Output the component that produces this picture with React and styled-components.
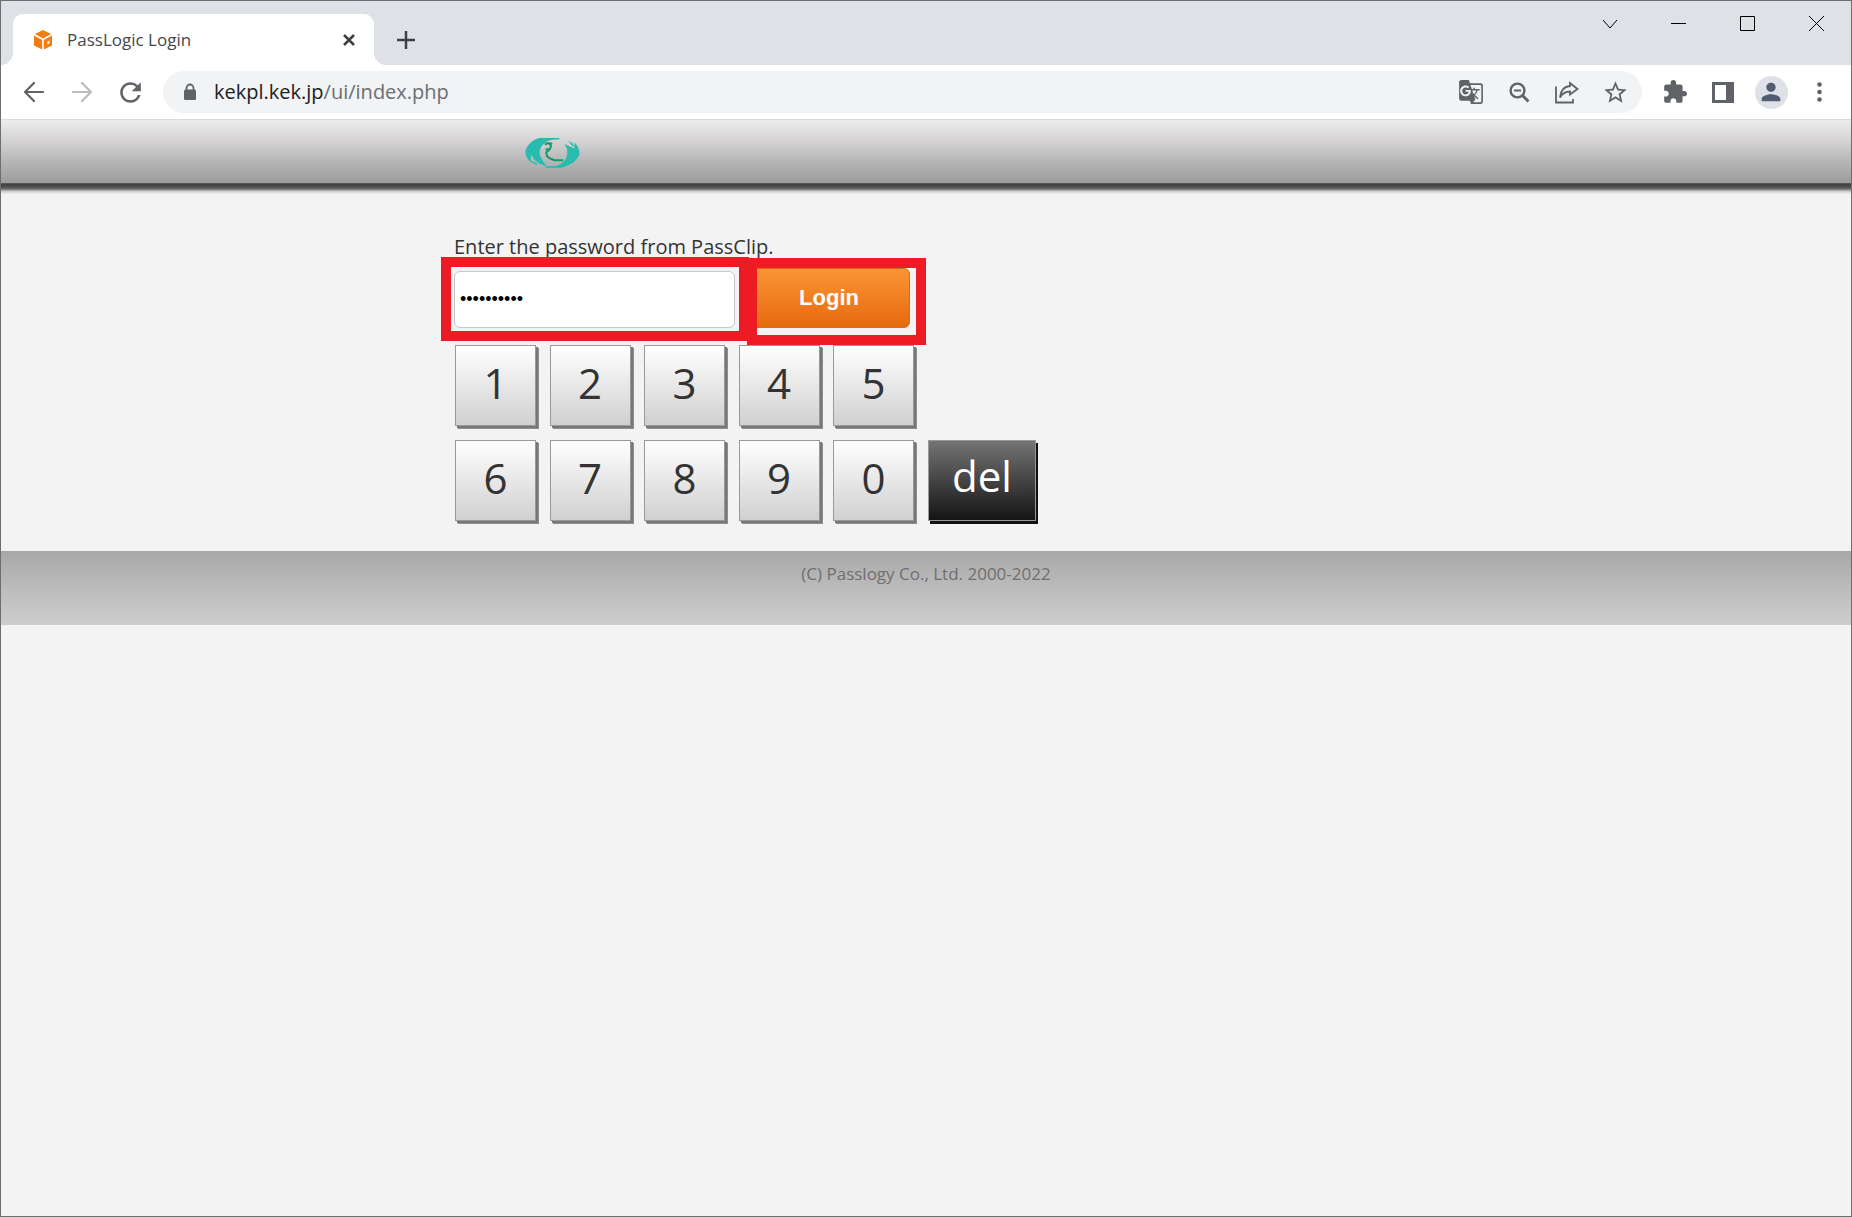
import React, { useState } from 'react'
import styled, { createGlobalStyle, css } from 'styled-components'
import {
  MdExtension,
  MdGTranslate,
  MdPerson,
  MdRefresh,
  MdStarBorder
} from 'react-icons/md'

const keyRows = [
  ['1', '2', '3', '4', '5'],
  ['6', '7', '8', '9', '0']
]

const App = () => {
  const [password, setPassword] = useState('1234567890')

  return (
    <Window>
      <GlobalStyle />
      <TabStrip>
        <Tab>
          <CubeIcon />
          <TabTitle>PassLogic Login</TabTitle>
          <TabButton aria-label="Close tab">
            <svg width="12" height="12" viewBox="0 0 12 12">
              <path d="M1 1l10 10M11 1L1 11" />
            </svg>
          </TabButton>
        </Tab>
        <NewTab aria-label="New tab">
          <svg width="18" height="18" viewBox="0 0 18 18">
            <path d="M9 0v18M0 9h18" />
          </svg>
        </NewTab>
        <WindowControls />
      </TabStrip>

      <Toolbar>
        <IconButton aria-label="Back">
          <ArrowIcon d="M19 10H1M10 1L1 10l9 9" />
        </IconButton>
        <IconButton aria-label="Forward" $faded>
          <ArrowIcon d="M1 10h18M10 1l9 9-9 9" />
        </IconButton>
        <IconButton aria-label="Reload">
          <MdRefresh size={31} />
        </IconButton>
        <AddressBar>
          <LockIcon />
          <Address>
            <Host>kekpl.kek.jp</Host>/ui/index.php
          </Address>
          <IconButton aria-label="Translate">
            <MdGTranslate size={26} />
          </IconButton>
          <IconButton aria-label="Zoom">
            <ZoomOutIcon />
          </IconButton>
          <IconButton aria-label="Share">
            <ShareIcon />
          </IconButton>
          <IconButton aria-label="Bookmark">
            <MdStarBorder size={27} />
          </IconButton>
        </AddressBar>
        <IconButton aria-label="Extensions">
          <MdExtension size={26} />
        </IconButton>
        <IconButton aria-label="Side panel">
          <svg width="22" height="21" viewBox="0 0 22 21">
            <path
              fill="currentColor"
              fillRule="evenodd"
              d="M0 0h22v21H0zM3 3v15h11V3z"
            />
          </svg>
        </IconButton>
        <IconButton aria-label="Profile">
          <Avatar>
            <MdPerson size={28} />
          </Avatar>
        </IconButton>
        <IconButton aria-label="Menu">
          <svg width="5" height="20" viewBox="0 0 5 20" fill="currentColor">
            <circle cx="2.5" cy="2.5" r="2.3" />
            <circle cx="2.5" cy="10" r="2.3" />
            <circle cx="2.5" cy="17.5" r="2.3" />
          </svg>
        </IconButton>
      </Toolbar>

      <Header>
        <Column>
          <Logo />
        </Column>
      </Header>

      <Main>
        <Column>
          <Label htmlFor="password">Enter the password from PassClip.</Label>
          <LoginRow onSubmit={e => e.preventDefault()}>
            <Field>
              <PasswordInput
                id="password"
                type="password"
                value={password}
                onChange={e => setPassword(e.target.value)}
              />
              <FieldFrame />
            </Field>
            <Field>
              <LoginButton type="submit">Login</LoginButton>
              <ButtonFrame />
            </Field>
          </LoginRow>
          <Keypad>
            {keyRows.map((row, index) => (
              <KeyRow key={index}>
                <Digits>
                  {row.map(digit => (
                    <Key
                      key={digit}
                      type="button"
                      onClick={() => setPassword(password + digit)}
                    >
                      {digit}
                    </Key>
                  ))}
                </Digits>
                {index === 1 && (
                  <DeleteKey
                    type="button"
                    onClick={() => setPassword(password.slice(0, -1))}
                  >
                    del
                  </DeleteKey>
                )}
              </KeyRow>
            ))}
          </Keypad>
        </Column>
      </Main>

      <Footer>(C) Passlogy Co., Ltd. 2000-2022</Footer>
    </Window>
  )
}

const WindowControls = () => (
  <Controls>
    <ControlButton aria-label="Search tabs">
      <svg width="16" height="16" viewBox="0 0 16 16">
        <path d="M1 4l7 8 7-8" />
      </svg>
    </ControlButton>
    <ControlButton aria-label="Minimize">
      <svg width="15" height="15" viewBox="0 0 15 15">
        <path d="M0 7.5h15" />
      </svg>
    </ControlButton>
    <ControlButton aria-label="Maximize">
      <svg width="15" height="15" viewBox="0 0 15 15">
        <path d="M.5.5h14v14H.5z" />
      </svg>
    </ControlButton>
    <ControlButton aria-label="Close">
      <svg width="15" height="15" viewBox="0 0 15 15">
        <path d="M0 0l15 15M15 0L0 15" />
      </svg>
    </ControlButton>
  </Controls>
)

const CubeIcon = () => (
  <svg width="18" height="20" viewBox="0 0 18 20" fill="#f57c12">
    <path d="M9 0l8 4-8 4.400L1 4z" />
    <path d="M0 5.600l8.200 4.400v9.600L0 15.400z" />
    <path
      fillRule="evenodd"
      d="M18 5.600L9.800 10v9.600l8.200-4.200zM15.400 10.600v3l-2 1v-3z"
    />
  </svg>
)

const ArrowIcon = ({ d }) => (
  <svg width="20" height="20" viewBox="0 0 20 20">
    <path
      d={d}
      fill="none"
      stroke="currentColor"
      strokeWidth="2.200"
      strokeLinecap="round"
    />
  </svg>
)

const LockIcon = () => (
  <svg width="20" height="18" viewBox="0 0 20 18">
    <path
      d="M6.500 8V5a3.500 3.500 0 0 1 7 0v3"
      fill="none"
      stroke="currentColor"
      strokeWidth="1.800"
    />
    <rect x="4" y="6.500" width="12" height="10.500" rx="1.500" fill="currentColor" />
  </svg>
)

const ZoomOutIcon = () => (
  <svg
    width="21"
    height="21"
    viewBox="0 0 21 21"
    fill="none"
    stroke="currentColor"
    strokeWidth="2.400"
  >
    <circle cx="8.5" cy="8.5" r="6.900" />
    <path d="M13 13l6.500 6.500" strokeWidth="2.800" />
    <path d="M5 8.500h7" strokeWidth="2" />
  </svg>
)

const ShareIcon = () => (
  <svg
    width="24"
    height="23"
    viewBox="0 0 24 23"
    fill="none"
    stroke="currentColor"
    strokeWidth="1.800"
  >
    <path d="M1 5.500V21.500h17V18" />
    <path d="M15 2l7.500 6-7.500 5.500v-3c-4.500 0-7.500 1.500-10 6 .5-6.500 4-11 10-11.500z" />
  </svg>
)

const Logo = () => (
  <svg width="56" height="32" viewBox="77 66 164 94" role="img">
    <g fill="#27bcae">
      <path d="M118 69h60v4c-18 0-32 1-42 10-14 10-20 26-13 42 4 10 12 18 17 26-18-3-32-12-40-24l-3-9c-5 8-4 15-1 24-12-8-18-20-18-34 4-18 20-33 40-39z" />
      <path d="M192 86l10 5 20 9v-18c10 10 15 20 15 34-7 18-20 28-36 34-7 4-13 6-20 6h-44v-4l30-1c18-4 28-14 33-29 3-14 0-26-8-36z" />
      <path d="M203 76l14 9 4 9-5-1z" />
      <path d="M96 136l16 8v4l-16-8z" />
    </g>
    <path
      fill="none"
      stroke="#159a6c"
      strokeWidth="6"
      d="M157 86l-12-2-10 4M148 85l5 8-3 8-13 2M149 103l-10 8 3 12 10 7 12 4h25"
    />
  </svg>
)

export default App

const uiFont = "'Open Sans', 'Noto Sans', sans-serif"

const GlobalStyle = createGlobalStyle`
  *,
  *::before,
  *::after {
    box-sizing: border-box;
  }

  body {
    margin: 0;
    background: #f3f3f3;
    font-family: ${uiFont};
    color: #333;
  }

  button {
    margin: 0;
    padding: 0;
    border: 0;
    background: none;
    color: inherit;
    font-family: inherit;
  }

  svg {
    display: block;
    flex: none;
  }
`

const Window = styled.div`
  display: flex;
  flex-direction: column;
  min-height: 100vh;
  border: 1px solid #6e6e6e;
`

const TabStrip = styled.div`
  display: flex;
  height: 64px;
  padding-left: 12px;
  background: #dee1e6;
`

const Tab = styled.div`
  position: relative;
  display: flex;
  align-items: center;
  align-self: flex-end;
  width: 361px;
  height: 51px;
  padding: 0 19px 0 21px;
  border-radius: 10px 10px 0 0;
  background: #fff;

  &::before,
  &::after {
    content: '';
    position: absolute;
    bottom: 0;
    width: 12px;
    height: 12px;
  }

  &::before {
    right: 100%;
    background: radial-gradient(circle at 0 0, #dee1e6 12px, #fff 12px);
  }

  &::after {
    left: 100%;
    background: radial-gradient(circle at 100% 0, #dee1e6 12px, #fff 12px);
  }
`

const TabTitle = styled.span`
  flex: 1;
  margin-left: 15px;
  font-size: 17px;
  line-height: 24px;
  color: #45474a;
`

const TabButton = styled.button`
  stroke: #3c4043;
  stroke-width: 2.5px;
`

const NewTab = styled(TabButton)`
  display: flex;
  align-items: center;
  justify-content: center;
  align-self: flex-end;
  width: 36px;
  height: 51px;
  margin-left: 14px;
`

const Controls = styled.div`
  display: flex;
  margin-left: auto;
`

const ControlButton = styled.button`
  display: flex;
  align-items: center;
  justify-content: center;
  width: 69px;
  height: 45px;

  svg {
    fill: none;
    stroke: #000;
  }
`

const Toolbar = styled.div`
  display: flex;
  align-items: center;
  height: 55px;
  padding: 0 8px 0 9px;
  border-bottom: 1px solid #d9dadc;
  background: #fff;
`

const IconButton = styled.button`
  display: flex;
  align-items: center;
  justify-content: center;
  width: 48px;
  height: 42px;
  color: ${props => (props.$faded ? '#babcbe' : '#5f6368')};
`

const AddressBar = styled.div`
  display: flex;
  flex: 1;
  align-items: center;
  height: 42px;
  margin: 0 9px;
  padding: 0 3px 0 17px;
  border-radius: 21px;
  background: #f1f3f4;
  color: #5f6368;
`

const Address = styled.div`
  flex: 1;
  margin-left: 14px;
  font-size: 20px;
  line-height: 28px;
  color: #6b6f73;
`

const Host = styled.span`
  color: #202124;
`

const Avatar = styled.span`
  display: flex;
  align-items: center;
  justify-content: center;
  width: 33px;
  height: 33px;
  border-radius: 50%;
  background: #dee1e6;
  color: #525d73;
`

const Column = styled.div`
  width: 100%;
  max-width: 944px;
  margin: 0 auto;
`

const Header = styled.header`
  display: flex;
  align-items: center;
  height: 64px;
  padding-top: 2px;
  border-bottom: 1px solid #555;
  background: linear-gradient(#ededed, #d5d3d3 33%, #b9b9b9 62%, #9d9b9c);

  svg {
    margin-left: 71px;
  }
`

const Main = styled.main`
  padding: 49px 0 30px;
  background: linear-gradient(
    #424242,
    #464646 2px,
    #6a6a6a 5px,
    #c4c4c4 7px,
    #f3f3f3 10px
  );
`

const Label = styled.label`
  display: block;
  font-size: 20px;
  line-height: 28px;
`

const LoginRow = styled.form`
  display: flex;
  align-items: flex-end;
  gap: 13px;
  margin-top: 7px;
`

const Field = styled.div`
  position: relative;
`

const PasswordInput = styled.input`
  display: block;
  width: 281px;
  height: 57px;
  padding: 0 5px;
  border: 1px solid #c8c8cc;
  border-radius: 6px;
  background: #fff;
  color: #000;
  font-family: 'Liberation Sans', Arial, sans-serif;
  font-size: 18px;
`

const LoginButton = styled.button`
  display: block;
  width: 162px;
  height: 60px;
  border: 1px solid #e0690f;
  border-radius: 6px;
  background: linear-gradient(#fb9536, #e66a0e);
  color: #fff;
  font-family: 'Liberation Sans', Arial, sans-serif;
  font-size: 22px;
  font-weight: bold;
`

const frame = css`
  position: absolute;
  border: 10px solid #ed1c24;
  pointer-events: none;
`

const FieldFrame = styled.div`
  ${frame}
  inset: -14px -14px -13px -13px;
`

const ButtonFrame = styled.div`
  ${frame}
  inset: -10px -16px -17px -1px;
`

const Keypad = styled.div`
  display: flex;
  flex-direction: column;
  gap: 14px;
  margin-top: 17px;
  padding-left: 1px;
`

const KeyRow = styled.div`
  display: flex;
  gap: 14px;
`

const Digits = styled.div`
  display: flex;
  justify-content: space-between;
  width: 459px;
`

const Key = styled.button`
  width: 81px;
  height: 81px;
  padding-bottom: 6px;
  border: 1px solid #999;
  background: linear-gradient(#fff, #d0d0d0);
  box-shadow: 2px 2px 0 #777, 3px 3px 0 #8e8e8e;
  font-size: 42px;
  line-height: 72px;
  color: #333;
`

const DeleteKey = styled(Key)`
  width: 108px;
  padding-bottom: 10px;
  background: linear-gradient(#747474, #141414);
  box-shadow: 2px 3px 0 #111;
  line-height: 68px;
  color: #fff;
`

const Footer = styled.footer`
  height: 74px;
  padding-top: 10px;
  background: linear-gradient(#a8a8a8, #cecece);
  font-size: 17px;
  line-height: 26px;
  text-align: center;
  color: #6f6f6f;
`
